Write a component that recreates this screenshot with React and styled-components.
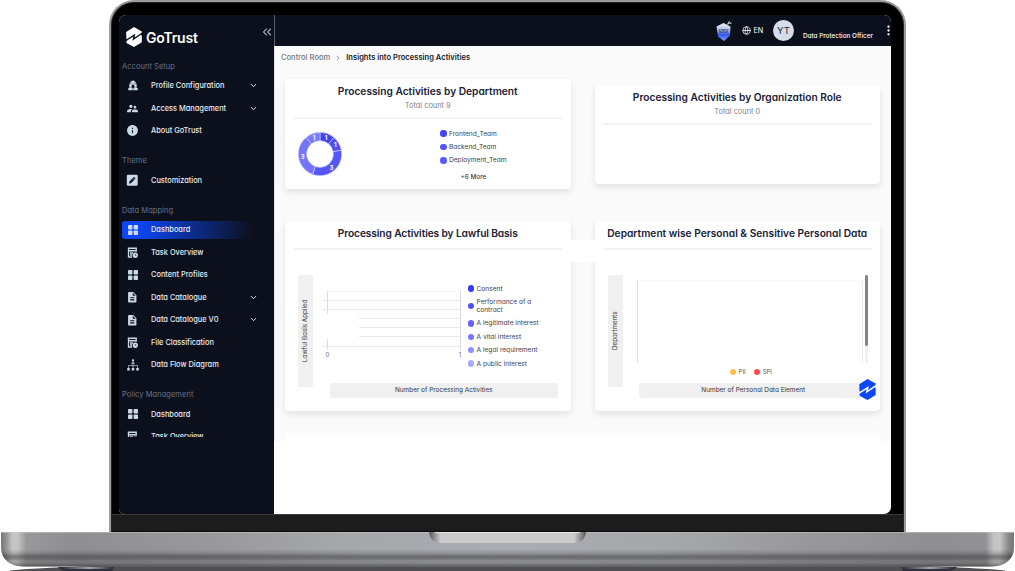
import React from 'react';
import styled, {createGlobalStyle} from 'styled-components';
import {MdSupervisorAccount, MdInfo, MdDescription} from 'react-icons/md';
import {FaPenSquare} from 'react-icons/fa';
import {ChevronDown, ChevronRight, ChevronsLeft, Globe, EllipsisVertical} from 'lucide-react';

const menu = [
    {
        title: 'Account Setup',
        items: [
            {label: 'Profile Configuration', icon: 'community', open: true},
            {label: 'Access Management', icon: 'users', open: true},
            {label: 'About GoTrust', icon: 'info'},
        ],
    },
    {
        title: 'Theme',
        items: [{label: 'Customization', icon: 'pen'}],
    },
    {
        title: 'Data Mapping',
        items: [
            {label: 'Dashboard', icon: 'grid', active: true},
            {label: 'Task Overview', icon: 'task'},
            {label: 'Content Profiles', icon: 'grid'},
            {label: 'Data Catalogue', icon: 'file', open: true},
            {label: 'Data Catalogue V0', icon: 'file', open: true},
            {label: 'File Classification', icon: 'task'},
            {label: 'Data Flow Diagram', icon: 'flow'},
        ],
    },
    {
        title: 'Policy Management',
        items: [
            {label: 'Dashboard', icon: 'grid'},
            {label: 'Task Overview', icon: 'task'},
        ],
    },
];

const departments = [
    {label: 'Frontend_Team', color: '#4343f5'},
    {label: 'Backend_Team', color: '#5555fb'},
    {label: 'Deployment_Team', color: '#5a5afc'},
];

const lawfulBasis = [
    {label: 'Consent', color: '#3a3af2'},
    {label: 'Performance of a contract', color: '#5151fb'},
    {label: 'A legitimate interest', color: '#6464fa'},
    {label: 'A vital interest', color: '#7575fd'},
    {label: 'A legal requirement', color: '#8f8ffd'},
    {label: 'A public interest', color: '#ababfc'},
];

const slices = [
    {value: 1, color: '#4242f3'},
    {value: 1, color: '#5050fa'},
    {value: 3, color: '#5656f8'},
    {value: 3, color: '#7474fd'},
    {value: 1, color: '#7a7afc'},
];

function Mark({color, ...props}) {
    return (
        <svg viewBox="0 0 50 64" fill={color} {...props}>
            <path d="M0 16 L25 0 L50 14 V49 L25 64 L1 51 Z" />
            <path d="M-2 44 L26 26 L23 39 L52 19" fill="none" stroke="var(--gap)" strokeWidth="4.500" />
            <path d="M-1 37 L5 41 L-1 45 ZM51 19 L45 23 L51 28 Z" fill="var(--gap)" />
        </svg>
    );
}

function MenuGlyph({name}) {
    if (name === 'users') return <MdSupervisorAccount size={13} />;
    if (name === 'info') return <MdInfo size={13} />;
    if (name === 'pen') return <FaPenSquare size={12.500} />;
    if (name === 'file') return <MdDescription size={12.500} />;
    if (name === 'community') {
        return (
            <svg width="10" height="11" viewBox="0 0 20 22" fill="currentColor">
                <path d="M3 10c0-12 14-12 14 0z" opacity=".75" />
                <circle cx="10" cy="4.500" r="3.200" />
                <circle cx="5" cy="11.500" r="2.800" />
                <circle cx="15" cy="11.500" r="2.800" />
                <path d="M.5 20.500v-3c0-2 2-3 4.500-3s4.500 1 4.500 3v3zM10.500 20.500v-3c0-2 2-3 4.500-3s4.500 1 4.500 3v3z" />
            </svg>
        );
    }
    if (name === 'task') {
        return (
            <svg width="11" height="11" viewBox="0 0 22 22" fill="none" stroke="currentColor" strokeWidth="2.600">
                <path d="M1.500 2.500h17v7M3 1v19h7M3 7.500h15M6 12h6M6 16h4" />
                <circle cx="16.500" cy="16.500" r="4" fill="currentColor" />
                <path d="M16.500 14v2.700h2.200" stroke="#0c101c" strokeWidth="1.200" />
            </svg>
        );
    }
    if (name === 'flow') {
        return (
            <svg width="12" height="12" viewBox="0 0 24 24" fill="currentColor">
                <circle cx="12" cy="3" r="2.300" />
                <path d="M8.500 9.500c0-4 7-4 7 0z" />
                <path d="M12 9v9M3 18v-5h18v5" fill="none" stroke="currentColor" strokeWidth="1.300" />
                <path d="M.5 18h5v5h-5zM9.500 18h5v5h-5zM18.500 18h5v5h-5z" />
            </svg>
        );
    }
    return (
        <svg width="10" height="10" viewBox="0 0 20 20" fill="currentColor">
            <rect width="8.800" height="8.800" rx="1.500" />
            <rect x="11.200" width="8.800" height="8.800" rx="1.500" />
            <rect y="11.200" width="8.800" height="8.800" rx="1.500" />
            <rect x="11.200" y="11.200" width="8.800" height="8.800" rx="1.500" />
        </svg>
    );
}

function Sidebar() {
    return (
        <SidebarStyled>
            <Brand>
                <Mark color="#fff" width="16" height="20" />
                <strong>GoTrust</strong>
                <ChevronsLeft size={14} strokeWidth={1.8} />
            </Brand>
            <MenuList>
                {menu.map((group) => (
                    <React.Fragment key={group.title}>
                        <MenuTitle>{group.title}</MenuTitle>
                        {group.items.map((item) => (
                            <MenuItem key={item.label} $active={item.active}>
                                <span className="icon"><MenuGlyph name={item.icon} /></span>
                                <span className="label">{item.label}</span>
                                {item.open && <ChevronDown size={9} strokeWidth={2.6} />}
                            </MenuItem>
                        ))}
                    </React.Fragment>
                ))}
            </MenuList>
        </SidebarStyled>
    );
}

function Mascot() {
    return (
        <svg width="18" height="22" viewBox="0 0 36 44">
            <defs>
                <linearGradient id="mascot" x1="0" y1="0" x2="0" y2="1">
                    <stop offset="0" stopColor="#f1f4fa" />
                    <stop offset=".4" stopColor="#a9bce0" />
                    <stop offset=".65" stopColor="#3157f0" />
                    <stop offset="1" stopColor="#8ba3ff" />
                </linearGradient>
            </defs>
            <path d="M3 13 L17 6 L31 13 L30 31 L18 42 L6 33 Z" fill="url(#mascot)" />
            <path d="M7 18h20l-2 8H9z" fill="#29406c" opacity=".6" />
            <path d="M10 19l5 4M24 19l-5 4" stroke="#b9cdf0" strokeWidth="1.500" />
            <path d="M25 9l4-6M29 7l4-1" stroke="#e8e8ec" strokeWidth="2.500" />
        </svg>
    );
}

function Header() {
    return (
        <HeaderStyled>
            <Mascot />
            <Language><Globe size={9} strokeWidth={2} />EN</Language>
            <Avatar>YT</Avatar>
            <Role>Data Protection Officer</Role>
            <EllipsisVertical size={13} strokeWidth={2.2} />
        </HeaderStyled>
    );
}

function Donut() {
    const total = slices.reduce((sum, s) => sum + s.value, 0);
    const point = (angle, r) => {
        const rad = (angle - 90) * Math.PI / 180;
        return [22 + r * Math.cos(rad), 22 + r * Math.sin(rad)];
    };
    let start = 0;
    return (
        <svg width="44" height="44" viewBox="0 0 44 44">
            {slices.map((slice, i) => {
                const end = start + slice.value / total * 360;
                const large = end - start > 180 ? 1 : 0;
                const d = `M${point(start, 21.7)} A21.7 21.7 0 ${large} 1 ${point(end, 21.7)}`
                    + ` L${point(end, 13.3)} A13.3 13.3 0 ${large} 0 ${point(start, 13.3)} Z`;
                const [x, y] = point((start + end) / 2, 17.6);
                start = end;
                return (
                    <g key={i}>
                        <path d={d} fill={slice.color} stroke="#d9d9ff" strokeWidth=".6" />
                        <SliceText x={x} y={y + 2.2}>{slice.value}</SliceText>
                    </g>
                );
            })}
        </svg>
    );
}

function LawfulChart() {
    return (
        <svg width="143" height="75" viewBox="0 0 143 75" stroke="#e8e8ea" fill="none">
            <path d="M4 5.500H138" stroke="#f4f4f4" />
            <path d="M0 14.500H138M0 23.500H138M36 32.500H138M36 41.500H138M36 50.500H138M0 60.500H138" />
            <path d="M4.500 5V28M4.500 53V64M137.500 5V64" stroke="#dcdce0" />
            <AxisText x="4.500" y="71">0</AxisText>
            <AxisText x="137" y="71">1</AxisText>
        </svg>
    );
}

function Dashboard() {
    return (
        <Content>
            <Breadcrumb>
                <span>Control Room</span>
                <ChevronRight size={8} strokeWidth={2} />
                <b>Insights into Processing Activities</b>
            </Breadcrumb>
            <Cards>
                <Card $height={110}>
                    <CardHead>
                        <h2>Processing Activities by Department</h2>
                        <p>Total count 9</p>
                    </CardHead>
                    <DonutRow>
                        <Donut />
                        <Legend $gap={13.4}>
                            {departments.map((d) => (
                                <LegendItem key={d.label} $color={d.color}>{d.label}</LegendItem>
                            ))}
                            <More>+6 More</More>
                        </Legend>
                    </DonutRow>
                </Card>
                <Card $height={99}>
                    <CardHead>
                        <h2>Processing Activities by Organization Role</h2>
                        <p>Total count 0</p>
                    </CardHead>
                </Card>
                <Card $height={190}>
                    <CardHead $spacing="-.11px">
                        <h2>Processing Activities by Lawful Basis</h2>
                    </CardHead>
                    <ChartBody>
                        <AxisY>Lawful Basis Applied</AxisY>
                        <LawfulPlot>
                            <LawfulChart />
                            <Legend $gap={13.4}>
                                {lawfulBasis.map((d) => (
                                    <LegendItem key={d.label} $color={d.color}>{d.label}</LegendItem>
                                ))}
                            </Legend>
                        </LawfulPlot>
                        <AxisX>Number of Processing Activities</AxisX>
                    </ChartBody>
                </Card>
                <Card $height={190}>
                    <CardHead>
                        <h2>Department wise Personal &amp; Sensitive Personal Data</h2>
                    </CardHead>
                    <ChartBody>
                        <AxisY>Departments</AxisY>
                        <div>
                            <ScrollPlot>
                                <PlotArea />
                                <ScrollTrack />
                            </ScrollPlot>
                            <LegendRow>
                                <LegendItem $color="#fdbd4d">PII</LegendItem>
                                <LegendItem $color="#fb4b4b">SPI</LegendItem>
                            </LegendRow>
                        </div>
                        <AxisX>Number of Personal Data Element</AxisX>
                    </ChartBody>
                    <ChatMark color="#0d47f5" width="17" height="21" />
                </Card>
            </Cards>
            <Connector />
            <NextCard />
        </Content>
    );
}

function LaptopBase() {
    return (
        <svg width="1015" height="39" viewBox="0 0 1015 39">
            <defs>
                <linearGradient id="metal" x1="0" x2="1" y1="0" y2="0">
                    <stop offset="0" stopColor="#77777a" />
                    <stop offset=".005" stopColor="#929294" />
                    <stop offset=".011" stopColor="#c4c4c5" />
                    <stop offset=".016" stopColor="#c6c6c7" />
                    <stop offset=".025" stopColor="#99999b" />
                    <stop offset=".07" stopColor="#8f8f92" />
                    <stop offset=".2" stopColor="#98989a" />
                    <stop offset=".34" stopColor="#a6a7ab" />
                    <stop offset=".5" stopColor="#abacb1" />
                    <stop offset=".66" stopColor="#a6a7ab" />
                    <stop offset=".8" stopColor="#98989a" />
                    <stop offset=".92" stopColor="#8f8f92" />
                    <stop offset=".972" stopColor="#929295" />
                    <stop offset=".98" stopColor="#c4c4c5" />
                    <stop offset=".986" stopColor="#c6c6c7" />
                    <stop offset=".994" stopColor="#8c8c8e" />
                    <stop offset="1" stopColor="#747476" />
                </linearGradient>
                <linearGradient id="shade" x1="0" x2="0" y1="0" y2="1">
                    <stop offset="0" stopColor="#2a2a2c" stopOpacity="0" />
                    <stop offset=".5" stopColor="#2a2a2c" stopOpacity="0" />
                    <stop offset=".62" stopColor="#2a2a2c" stopOpacity=".2" />
                    <stop offset=".7" stopColor="#2a2a2c" stopOpacity=".48" />
                    <stop offset=".78" stopColor="#2a2a2c" stopOpacity=".42" />
                    <stop offset=".83" stopColor="#2a2a2c" stopOpacity=".24" />
                    <stop offset=".9" stopColor="#2a2a2c" stopOpacity=".27" />
                    <stop offset="1" stopColor="#2a2a2c" stopOpacity=".6" />
                </linearGradient>
                <linearGradient id="notch" x1="0" x2="1" y1="0" y2="0">
                    <stop offset="0" stopColor="#55555a" />
                    <stop offset=".03" stopColor="#88888c" />
                    <stop offset=".075" stopColor="#cbcbcc" />
                    <stop offset=".925" stopColor="#cbcbcc" />
                    <stop offset=".97" stopColor="#88888c" />
                    <stop offset="1" stopColor="#55555a" />
                </linearGradient>
                <linearGradient id="foot" x1="0" x2="1" y1="0" y2="0">
                    <stop offset="0" stopColor="#33343e" />
                    <stop offset=".55" stopColor="#a2a3ab" />
                    <stop offset="1" stopColor="#33343e" />
                </linearGradient>
            </defs>
            <path d="M10 38.500 Q40 35.500 110 33.500 H905 Q975 35.500 1005 38.500 V39 H10 Z" fill="#505052" />
            <path d="M58 35 H114 L112 39 H66 Q60 38 58 35 Z" fill="#30313d" />
            <path d="M901 35 H957 Q955 38 949 39 H903 Z" fill="#30313d" />
            <path d="M62 35 H112 V37 H66 Z" fill="url(#foot)" />
            <path d="M903 35 H953 L949 37 H903 Z" fill="url(#foot)" />
            <path d="M1 0 V15 C1 27 9 34 23 34.500 H992 C1006 34 1014 27 1014 15 V0 Z" fill="url(#metal)" />
            <path d="M1 0 V15 C1 27 9 34 23 34.500 H992 C1006 34 1014 27 1014 15 V0 Z" fill="url(#shade)" />
            <path d="M1 .5 H1014" stroke="#c4c4c6" strokeWidth="1" opacity=".6" />
            <path d="M429 0 H586 C585 7 581 11 574 11 H441 C434 11 430 7 429 0 Z" fill="url(#notch)" />
            <path d="M435 .5 H580" stroke="#e4e4e4" strokeWidth="1" />
        </svg>
    );
}

function App() {
    return (
        <Laptop>
            <GlobalStyle />
            <Lid>
                <Screen>
                    <Sidebar />
                    <Main>
                        <Header />
                        <Dashboard />
                    </Main>
                </Screen>
                <Hinge />
            </Lid>
            <LaptopBase />
        </Laptop>
    );
}

const GlobalStyle = createGlobalStyle`
    *{
        margin:0;
        padding:0;
        box-sizing:border-box;
    }
    body{
        background:#fff;
        font-family:Inter, "Open Sans", sans-serif;
        font-feature-settings:'cv11';
        overflow:hidden;
    }
    svg{
        display:block;
        flex-shrink:0;
    }
`;

const Laptop = styled.div`
    width:1015px;
    height:571px;
    display:flex;
    flex-direction:column;
    align-items:center;
    overflow:hidden;
`;

const Lid = styled.div`
    width:797px;
    height:532px;
    padding:13px 13px 0 8px;
    background:#000;
    border:2px solid #9b9c9f;
    border-bottom:0;
    border-radius:25px 25px 0 0;
    box-shadow:inset 0 0 0 1px #25262a;
`;

const Screen = styled.div`
    height:499px;
    display:flex;
    border-radius:7px 7px 7px 5px;
    background:#fff;
    overflow:hidden;
`;

const Hinge = styled.div`
    height:18px;
    margin:0 -12px 0 -7px;
    background:#1c1c1c;
    border-top:1px solid #3a3a3a;
    border-bottom:1px solid #0c0c0c;
`;

const SidebarStyled = styled.aside`
    width:155px;
    background:#0c101c;
    --gap:#0c101c;
`;

const Brand = styled.div`
    height:32.500px;
    display:flex;
    align-items:center;
    padding:12px 0 0 7px;
    color:#fff;

    strong{
        margin-left:4px;
        flex:1;
        font-size:14px;
        font-weight:600;
        letter-spacing:-.2px;
    }
    svg:last-child{
        margin-top:-11px;
        color:#c9cdd6;
    }
`;

const MenuList = styled.nav`
    height:389.500px;
    display:flex;
    flex-direction:column;
    overflow:hidden;
    padding:0 21px 0 3px;
`;

const MenuTitle = styled.h3`
    flex:none;
    height:27px;
    padding-top:11px;
    font-size:7.500px;
    line-height:16px;
    font-weight:400;
    letter-spacing:.05px;
    color:#69748a;
`;

const MenuItem = styled.div`
    flex:none;
    height:18.500px;
    margin:2px 0;
    display:flex;
    align-items:center;
    border-radius:3px;
    background:${(p) => p.$active ? 'linear-gradient(90deg, #0d47f5 12%, #0c101c)' : 'none'};
    color:#e9ecf2;

    .icon{
        width:21px;
        display:flex;
        justify-content:center;
        color:#cbd8e8;
    }
    .label{
        flex:1;
        margin-left:8px;
        font-size:7.400px;
        font-weight:500;
        white-space:nowrap;
    }
    > svg{
        margin-right:-4.500px;
    }
`;

const Main = styled.main`
    flex:1;
    min-width:0;
`;

const HeaderStyled = styled.header`
    height:31px;
    display:flex;
    align-items:center;
    justify-content:flex-end;
    background:#0c101c;
    border-left:1px solid #5c606b;
    color:#fff;

    > svg:last-child{
        margin-right:-3.500px;
    }
`;

const Language = styled.div`
    width:31px;
    margin-left:9px;
    display:flex;
    align-items:center;
    gap:2.500px;
    font-size:7.200px;
`;

const Avatar = styled.div`
    width:21px;
    height:21px;
    display:grid;
    place-items:center;
    border-radius:50%;
    background:#d5dde8;
    color:#262b36;
    font-size:9.500px;
`;

const Role = styled.span`
    width:75.500px;
    margin:10px 3px 0 9px;
    font-size:6.350px;
    white-space:nowrap;
    font-weight:500;
`;

const Content = styled.section`
    height:395px;
    padding:5px 11px 0 10px;
    border-left:1px solid #e6e6e8;
    background:#fafafa;
    overflow:hidden;
`;

const Breadcrumb = styled.div`
    height:13px;
    display:flex;
    align-items:center;
    gap:4px;
    margin-left:-4px;
    font-size:7.500px;
    color:#6e7889;
    font-weight:500;
    letter-spacing:.04px;

    b{
        font-weight:600;
        color:#14171f;
    }
`;

const Cards = styled.div`
    margin-top:15px;
    display:grid;
    grid-template-columns:1fr 1fr;
    gap:32px 24px;
    align-items:center;
`;

const Card = styled.article`
    position:relative;
    height:${(p) => p.$height}px;
    padding:6px 8.500px;
    border-radius:4px;
    background:#fff;
    box-shadow:0 3px 6px rgba(0, 0, 0, .1);
`;

const CardHead = styled.div`
    border-bottom:2px solid #f3f3f4;
    text-align:center;
    letter-spacing:${(p) => p.$spacing || 'normal'};

    h2{
        height:14px;
        font-size:10.200px;
        line-height:13px;
        font-weight:600;
        white-space:nowrap;
        color:#1a2138;
        margin-bottom:7px;
    }
    p{
        margin-top:-7px;
        height:18px;
        font-size:7.400px;
        line-height:13px;
        color:#7b8494;
    }
`;

const DonutRow = styled.div`
    display:flex;
    justify-content:space-between;
    padding:8px 37px 0 4.500px;

    > svg{
        margin-top:5px;
    }
`;

const Legend = styled.ul`
    width:85px;
    list-style:none;
    font-size:6.600px;
    line-height:8px;
    color:#3d4149;

    li{
        padding:${(p) => (p.$gap - 8) / 2}px 0;
    }
`;

const LegendItem = styled.li`
    display:flex;
    align-items:center;
    gap:2.500px;
    list-style:none;

    &::before{
        content:"";
        flex:none;
        width:6.500px;
        height:6.500px;
        border-radius:50%;
        background:${(p) => p.$color};
    }
`;

const More = styled.p`
    margin:6px 0 0 20.500px;
    font-weight:500;
    font-size:6.400px;
`;

const ChartBody = styled.div`
    display:grid;
    grid-template:108px 15px / 15px 1fr;
    column-gap:16.500px;
    padding:25px 4px 0 4.500px;
`;

const AxisY = styled.div`
    grid-row:1 / 3;
    height:112px;
    display:grid;
    place-items:center;
    border-radius:2px;
    background:#f0f0f0;
    color:#33363d;
    font-size:6.300px;
    line-height:15px;
    writing-mode:vertical-rl;
    transform:rotate(180deg);
    white-space:nowrap;
`;

const AxisX = styled.div`
    border-radius:2px;
    background:#f0f0f0;
    color:#33363d;
    font-size:6.450px;
    line-height:15px;
    text-align:center;
`;

const LawfulPlot = styled.div`
    display:flex;
    margin-left:-6.500px;

    > svg{
        margin-top:11px;
    }
    ul{
        margin:7px 0 0 1.500px;
        width:76px;
    }
`;

const ScrollPlot = styled.div`
    display:flex;
    gap:2px;
    height:88px;
`;

const PlotArea = styled.div`
    flex:1;
    margin:5px 0 0 -2px;
    border:solid #dfdfe2;
    border-width:0 1px;
    border-right-color:#ededee;
    border-top:1px solid #f7f7f7;
`;

const ScrollTrack = styled.div`
    width:3px;
    background:#f1f1f1;

    &::before{
        content:"";
        display:block;
        height:71px;
        border-radius:2px;
        background:#858587;
    }
`;

const LegendRow = styled.div`
    display:flex;
    justify-content:center;
    gap:8px;
    padding:5px 5px 0 0;
    font-size:6px;
    line-height:8px;
    color:#555962;
`;

const ChatMark = styled(Mark)`
    --gap:#fff;
    position:absolute;
    right:4px;
    bottom:11px;
`;

const Connector = styled.div`
    width:26px;
    height:22px;
    margin:-171px auto 0;
    background:#fff;
    position:relative;
`;

const NextCard = styled.div`
    height:8px;
    margin-top:171px;
    border-radius:4px 4px 0 0;
    background:#fff;
`;

const SliceText = styled.text`
    fill:#fff;
    font-size:6px;
    font-weight:700;
    text-anchor:middle;
`;

const AxisText = styled.text`
    stroke:none;
    fill:#6b6b70;
    font-size:6px;
    text-anchor:middle;
`;

export default App;
